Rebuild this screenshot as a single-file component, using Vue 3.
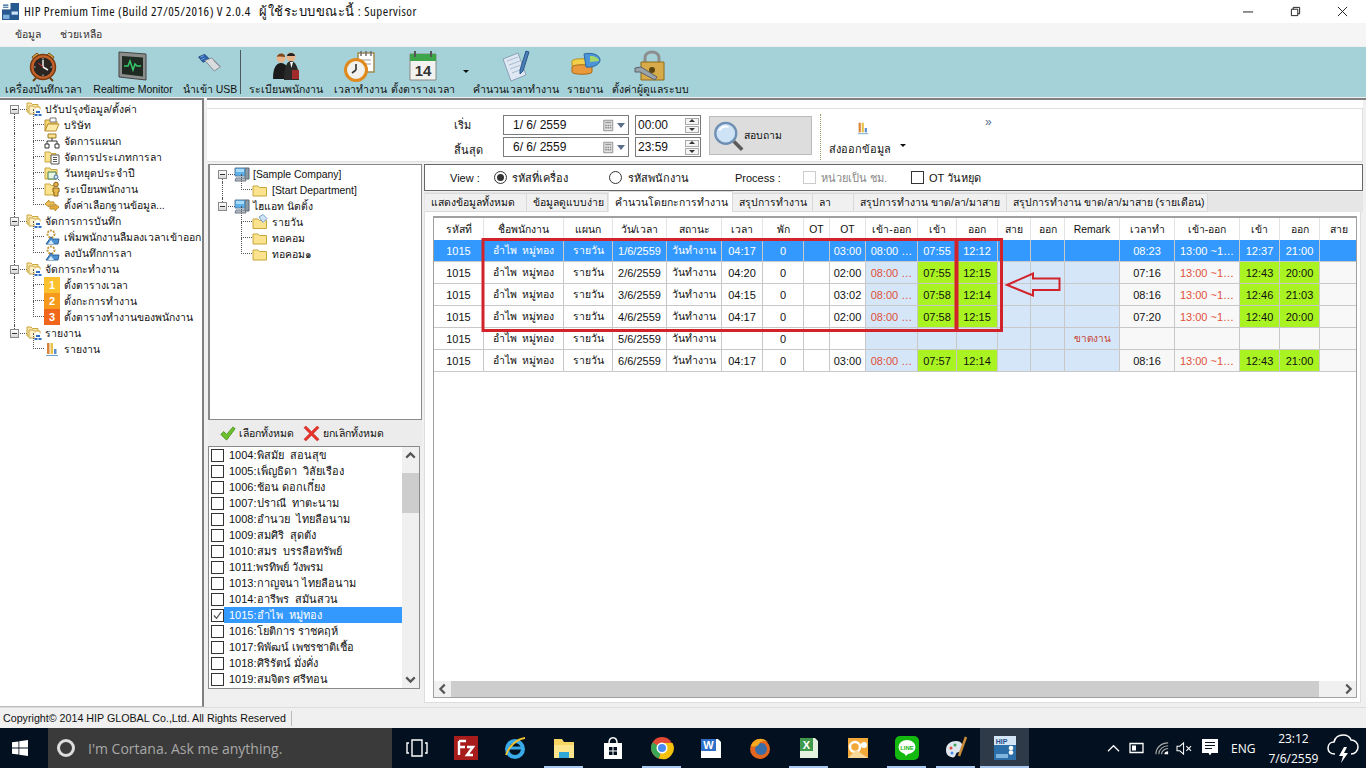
<template>
  <div class="app">
    <!-- shared icons -->
    <svg class="defs" aria-hidden="true">
      <symbol id="folder" viewBox="0 0 16 16"><path d="M1 4h5l1.500 1.500H14.500V14H1z" fill="#fbe28c" stroke="#c8a63e"/></symbol>
      <symbol id="folder-open" viewBox="0 0 16 16"><path d="M1 3h5l1.500 1.500H13V7H4l-3 7z" fill="#f6d774" stroke="#b98f2c"/><path d="M4 7h11l-3 7H1z" fill="#fdeaa6" stroke="#b98f2c"/><path d="M6 1h6v4H6z" fill="#fff" stroke="#777"/></symbol>
      <symbol id="folder-paper" viewBox="0 0 16 16"><path d="M1 5h5l1.500 1.500H14.500V14.500H1z" fill="#fbe28c" stroke="#c8a63e"/><path d="M7 3l4-2.500 4 4-4 4z" fill="#cfe3f7" stroke="#7aa1c9"/></symbol>
      <symbol id="group" viewBox="0 0 16 16"><path d="M1 2h4l1.500 1.500H12V11H1z" fill="#fbe7ae" stroke="#c8a63e"/><path d="M3 5h4l1.500 1H14V13H3z" fill="#fdf0c8" stroke="#c8a63e"/><path d="M9 9l3-2.500 3 2.500v6H9z" fill="#fff"/><path d="M10 10h4v2h-4zM8.500 13h3v2h-3zM12.500 13h3v2h-3z" fill="#2f6fc4"/></symbol>
      <symbol id="org" viewBox="0 0 16 16"><path d="M4 1h8v4H4z" fill="#fbe28c" stroke="#9a7d28"/><path d="M8 5v3M3 11V8h10v3" fill="none" stroke="#333"/><path d="M1 11h4v4H1zM11 11h4v4h-4z" fill="#fff" stroke="#333"/></symbol>
      <symbol id="folder-doc" viewBox="0 0 16 16"><path d="M1 3h5l1 1.500H12V13H1z" fill="#fbe28c" stroke="#c8a63e"/><path d="M7 6h8v9H7z" fill="#fff" stroke="#555"/><path d="M9 8.500h4M9 10.500h4M9 12.500h4" stroke="#555"/></symbol>
      <symbol id="folder-cal" viewBox="0 0 16 16"><path d="M1 3h5l1 1.500H13V14H1z" fill="#fbe28c" stroke="#c8a63e"/><path d="M4 7h8v7H4z" fill="#e9f6e6" stroke="#3f7f4a"/><circle cx="12" cy="12" r="2" fill="#cfe3f7" stroke="#4a74a8"/><path d="M13.500 13.500L15.500 15.500" stroke="#4a74a8"/></symbol>
      <symbol id="folder-man" viewBox="0 0 16 16"><path d="M1 3h5l1 1.500H10V14H1z" fill="#fbe28c" stroke="#c8a63e"/><circle cx="12" cy="3.500" r="2.300" fill="#e8b04a" stroke="#8a6416"/><path d="M9 7h6v4h-1v4h-4v-4H9z" fill="#e8b84a" stroke="#8a6416"/></symbol>
      <symbol id="swap" viewBox="0 0 16 16"><path d="M1 7l4-4v2h5v3H5v2z" fill="#f3c35a" stroke="#b98f2c"/><path d="M15 10l-4 4v-2H6V9h5V7z" fill="#e8a93a" stroke="#b98f2c"/></symbol>
      <symbol id="gear" viewBox="0 0 16 16"><circle cx="7" cy="5" r="3.500" fill="none" stroke="#c79a3d" stroke-width="2" stroke-dasharray="2 1"/><circle cx="7" cy="5" r="1.300" fill="#fff"/><path d="M2 15l5-7 1.500 2H15l-1 5z" fill="#4d92cf" stroke="#2f6199"/><path d="M4 15l3-4 3 4z" fill="#d8ecfb"/></symbol>
      <symbol id="bars" viewBox="0 0 16 16"><path d="M3 2h2.500v11H3z" fill="#d8843c"/><path d="M6.500 2H9v11H6.500z" fill="#e8c24a"/><path d="M10 8h2.500v5H10z" fill="#5b8fd0"/><path d="M2 14.500h12" stroke="#6aa0c9"/></symbol>
      <symbol id="computer" viewBox="0 0 16 16"><path d="M11 2h4v11h-4z" fill="#8d9aa8" stroke="#5b6773"/><path d="M1 2h10v8H1z" fill="#5cb1ee" stroke="#5b7f9e"/><path d="M2 3h8v3H2z" fill="#a6dcfa"/><path d="M2 12h9l1 3H1z" fill="#b3bcc6" stroke="#6f7a85"/></symbol>
      <symbol id="cal-drop" viewBox="0 0 16 16"><path d="M1 1h12v14H1z" fill="#e3e3e3" stroke="#777"/><path d="M3 3h8v2H3z" fill="#9a9a9a"/><path d="M3 7h2v2H3zM6 7h2v2H6zM9 7h2v2H9zM3 10h2v2H3zM6 10h2v2H6zM9 10h2v2H9z" fill="#8a8a8a"/></symbol>
    </svg>

    <header class="titlebar">
      <svg class="app-logo" viewBox="0 0 16 16"><path d="M0 0h16v16H0z" fill="#27588f"/><path d="M0 0h8v6H0z" fill="#fff"/><path d="M9 8h6v3H9z" fill="#cfe3f7"/><path d="M1 11h6v4H1z" fill="#7fb0de"/><path d="M1 2h5M1 4h5" stroke="#27588f"/></svg>
      <span class="title-text">HIP Premium Time (Build 27/05/2016) V 2.0.4 &nbsp;&nbsp;ผู้ใช้ระบบขณะนี้ : Supervisor</span>
      <div class="win-btns">
        <svg viewBox="0 0 12 12"><path d="M0 6.500h11" stroke="#111"/></svg>
        <svg viewBox="0 0 12 12"><path d="M1.500 3.500h7v7h-7zM3.500 3.500v-2h7v7h-2" fill="none" stroke="#111"/></svg>
        <svg viewBox="0 0 12 12"><path d="M1 1l10 10M11 1L1 11" stroke="#111"/></svg>
      </div>
    </header>

    <nav class="menubar">
      <span>ข้อมูล</span>
      <span>ช่วยเหลือ</span>
    </nav>

    <div class="toolbar">
      <template v-for="t in tools" :key="t.label">
        <div v-if="t.sep" class="tool-sep"></div>
        <div class="tool" :class="t.cls">
          <svg class="tool-icon" viewBox="0 0 32 32" v-html="t.svg"></svg>
          <span>{{ t.label }}</span>
        </div>
        <div v-if="t.caret" class="tool-caret"></div>
      </template>
    </div>

    <div class="main">
      <aside class="side">
        <div class="tree">
          <div v-for="(r, i) in sideTree" :key="i" class="node" :class="r.cls">
            <i v-if="r.pipe" class="pipe" :class="r.pipe"></i>
            <b v-if="r.root" class="box"></b>
            <span v-if="r.badge" class="badge" :class="'b' + r.badge">{{ r.badge }}</span>
            <svg v-else class="ic"><use :href="'#' + r.icon" /></svg>
            <span class="node-text">{{ r.text }}</span>
          </div>
        </div>
      </aside>

      <section class="right">
        <div class="strip"></div>
        <div class="filter">
          <div class="f-labels">
            <span>เริ่ม</span>
            <span>สิ้นสุด</span>
          </div>
          <div class="f-col">
            <div v-for="d in ['1/ 6/ 2559', '6/ 6/ 2559']" :key="d" class="date">
              <span>{{ d }}</span>
              <svg class="cal"><use href="#cal-drop" /></svg>
              <i class="mini-caret"></i>
            </div>
          </div>
          <div class="f-col f-times">
            <div v-for="v in ['00:00', '23:59']" :key="v" class="time">
              <span>{{ v }}</span>
              <div class="spin"><i class="up"></i><i class="down"></i></div>
            </div>
          </div>
          <button class="query">
            <svg viewBox="0 0 34 34"><circle cx="14" cy="14" r="11.500" fill="#cfe3f7" stroke="#6d8fb3" stroke-width="2.500"/><path d="M7 11c2-4 6-5 10-4" stroke="#fff" stroke-width="2" fill="none"/><path d="M23 23l9 9" stroke="#5b5b5b" stroke-width="4"/></svg>
            <span>สอบถาม</span>
          </button>
          <div class="dotted"></div>
          <div class="export">
            <svg class="ic-export"><use href="#bars" /></svg>
            <div class="export-row"><span>ส่งออกข้อมูล</span><i class="mini-caret dark"></i></div>
          </div>
          <span class="more">»</span>
        </div>

        <div class="lower">
          <div class="mid">
            <div class="mid-tree">
              <div class="tree tree-mid">
                <div v-for="(r, i) in midTree" :key="i" class="node" :class="r.cls">
                  <i v-if="r.pipe" class="pipe" :class="r.pipe"></i>
                  <b v-if="r.root" class="box"></b>
                  <svg class="ic"><use :href="'#' + r.icon" /></svg>
                  <span class="node-text">{{ r.text }}</span>
                </div>
              </div>
            </div>
            <div class="list-tools">
              <svg viewBox="0 0 18 18"><path d="M2 10l3-3 3 3 7-8 2 2-9 12z" fill="#6cc22c" stroke="#4a8f1c"/></svg>
              <span>เลือกทั้งหมด</span>
              <svg class="x" viewBox="0 0 18 18"><path d="M1 3l2-2 6 6 6-6 2 2-6 6 6 6-2 2-6-6-6 6-2-2 6-6z" fill="#e8342c" stroke="#b8221c" stroke-width=".5"/></svg>
              <span>ยกเลิกทั้งหมด</span>
            </div>
            <div class="list">
              <div class="list-rows">
                <div v-for="p in people" :key="p" class="person" :class="{ on: p.startsWith('1015') }">
                  <span class="check">
                    <svg v-if="p.startsWith('1015')" viewBox="0 0 12 12"><path d="M2 6l3 3 5-7" fill="none" stroke="#555" stroke-width="1.300"/></svg>
                  </span>
                  <span class="person-name">{{ p }}</span>
                </div>
              </div>
              <div class="vscroll">
                <svg viewBox="0 0 16 16"><path d="M4 10l4-4 4 4" fill="none" stroke="#555" stroke-width="2"/></svg>
                <div class="vtrack"><div class="vthumb"></div></div>
                <svg viewBox="0 0 16 16"><path d="M4 6l4 4 4-4" fill="none" stroke="#555" stroke-width="2"/></svg>
              </div>
            </div>
          </div>

          <div class="work">
            <div class="viewbar">
              <span>View :</span>
              <span class="radio on"></span>
              <span>รหัสที่เครื่อง</span>
              <span class="radio"></span>
              <span>รหัสพนักงาน</span>
              <span>Process :</span>
              <span class="check off"></span>
              <span class="muted">หน่วยเป็น ชม.</span>
              <span class="check"></span>
              <span>OT วันหยุด</span>
            </div>
            <div class="tabs">
              <span v-for="t in tabs" :key="t.label" class="tab" :class="{ active: t.active }" :style="{ width: t.w + 'px' }">{{ t.label }}</span>
            </div>
            <div class="tab-body">
              <div class="grid">
                <div class="grid-scroll">
                  <table>
                    <colgroup><col v-for="(w, i) in colWidths" :key="i" :style="{ width: w + 'px' }"></colgroup>
                    <thead>
                      <tr><th v-for="(h, i) in headers" :key="i">{{ h }}</th></tr>
                    </thead>
                    <tbody>
                      <tr v-for="(row, ri) in rows" :key="ri" :class="{ sel: ri === 0 }">
                        <td v-for="(c, ci) in row" :key="ci" :class="cellClass(c, ci)">{{ c }}</td>
                      </tr>
                    </tbody>
                  </table>
                </div>
                <div class="hscroll">
                  <div class="harrow"><svg viewBox="0 0 16 16"><path d="M10 3L5 8l5 5" fill="none" stroke="#555" stroke-width="2.500"/></svg></div>
                  <div class="hthumb"></div>
                  <div class="htrack"></div>
                  <div class="harrow"><svg viewBox="0 0 16 16"><path d="M6 3l5 5-5 5" fill="none" stroke="#555" stroke-width="2.500"/></svg></div>
                </div>
              </div>
            </div>
          </div>
        </div>
      </section>
    </div>

    <footer class="status">
      <span>Copyright© 2014 HIP GLOBAL Co.,Ltd. All Rights Reserved</span>
      <i></i>
    </footer>

    <div class="taskbar">
      <div class="start">
        <svg viewBox="0 0 16 16"><path d="M0 2.300l6.500-.9v6.200H0zM7.300 1.300L16 0v7.600H7.300zM0 8.400h6.500v6.200L0 13.700zM7.300 8.400H16V16l-8.700-1.300z" fill="#fff"/></svg>
      </div>
      <div class="cortana">
        <i></i>
        <span>I'm Cortana. Ask me anything.</span>
      </div>
      <div v-for="a in apps" :key="a.id" class="task" :class="{ open: a.open, hip: a.id === 'hip' }">
        <svg viewBox="0 0 24 24" v-html="a.svg"></svg>
      </div>
      <div class="tray">
        <svg class="t1" viewBox="0 0 14 14"><path d="M1 10l6-6 6 6" fill="none" stroke="#fff" stroke-width="1.300"/></svg>
        <svg class="t2" viewBox="0 0 16 14"><path d="M1 2.500h13v9H1z" fill="none" stroke="#fff" stroke-width="1.300"/><path d="M3 4.500h4v5H3z" fill="#fff"/></svg>
        <svg class="t3" viewBox="0 0 16 16"><path d="M1 14C1 7 7 2 14 2M4 14c0-5 5-9 10-9M7 14c0-3 3-6 7-6" fill="none" stroke="#aaa" stroke-width="1.200"/><path d="M10 14c0-2 2-3 4-3v3z" fill="#fff"/></svg>
        <svg class="t4" viewBox="0 0 18 16"><path d="M1 5.500h3L8 2v12L4 10.500H1z" fill="none" stroke="#fff" stroke-width="1.100"/><path d="M11 5.500l5 5M16 5.500l-5 5" stroke="#fff" stroke-width="1.100"/></svg>
        <svg class="t5" viewBox="0 0 16 18"><path d="M0 0h16v14H9.500L8 16.500 6.500 14H0z" fill="#fff"/><path d="M3 3.500h10M3 6.500h10M3 9.500h7" stroke="#03101f" stroke-width="1.200"/></svg>
        <span class="eng">ENG</span>
        <div class="clock"><span>23:12</span><span>7/6/2559</span></div>
        <svg class="t6" viewBox="0 0 32 32"><path d="M8 22c-5 0-7-3-7-6 0-4 3-6 6-6 1-4 4-7 9-7 4 0 7 2 8 5 4 0 7 3 7 7 0 4-3 7-7 7" fill="none" stroke="#fff" stroke-width="1.500"/><path d="M17 15l-5 9h4l-2 7 7-10h-4l3-6z" fill="#fff"/></svg>
      </div>
    </div>

    <!-- red marks drawn over the screenshot -->
    <svg class="marks" viewBox="0 0 1366 768">
      <path d="M483 239.500h473v91H483zM957 239.500h44.500v91H957z" fill="none" stroke="#d2232a" stroke-width="3"/>
      <path d="M1007 285l26-11.500v5h26.500v11.500H1033v5.500z" fill="none" stroke="#d2232a" stroke-width="2"/>
    </svg>
  </div>
</template>

<script setup>
const tools = [
  { label: 'เครื่องบันทึกเวลา', cls: 'w1', svg: '<path d="M5 7l5-4 2 2-5 5zM27 7l-5-4-2 2 5 5z" fill="#d8a24a" stroke="#7a5316"/><path d="M9 28l-3 3M23 28l3 3" stroke="#6b3d12" stroke-width="2"/><circle cx="16" cy="17" r="12.500" fill="#c4622a" stroke="#7a3a12" stroke-width="1.500"/><circle cx="16" cy="17" r="9.500" fill="#2b2622"/><path d="M16 17V10M16 17l5 3" stroke="#eee" stroke-width="1.500"/><path d="M16 17l-5-4" stroke="#d33" /><path d="M16 8v1.500M16 24.500V26M7 17h1.500M23.500 17H25" stroke="#ccc"/>' },
  { label: 'Realtime Monitor', cls: 'w2', svg: '<path d="M2 2l27 2v26L2 27z" fill="#8a8d8b" stroke="#444"/><path d="M5 6l21 1.500v19L5 24z" fill="#1f2a22"/><path d="M7 16h4l2-5 3 9 2-6 2 2h4" fill="none" stroke="#38c76a" stroke-width="1.500"/>' },
  { label: 'นำเข้า USB', cls: 'w3', svg: '<path d="M3 8l7-3 5 5-7 4z" fill="#2a62b0" stroke="#18406f"/><path d="M10 12l8-3 10 10-7 5z" fill="#d8dcdf" stroke="#7d8489"/><path d="M20 12l7 7" stroke="#8b9298"/><path d="M5 8l4-1.500M6 11l4-2" stroke="#7fb0e6"/>' },
  { label: 'ระเบียนพนักงาน', cls: 'w4', sep: true, svg: '<circle cx="11" cy="8" r="4.500" fill="#e8b48a"/><path d="M7 7c0-4 8-5 8 0-3 0-5-1-8 0z" fill="#7a4a1e"/><path d="M3 29c0-11 3-16 8-16s8 5 8 16z" fill="#1b1b1b"/><circle cx="21" cy="7" r="4.500" fill="#e8b48a"/><path d="M17 6c0-4 8-4 8 0z" fill="#222"/><path d="M14 30c0-13 3-19 7-19s8 6 8 19z" fill="#2a2a2a"/><path d="M20 12h3l-1.500 6z" fill="#fff"/><path d="M22 20h7v9h-7z" fill="#a12a2a"/>' },
  { label: 'เวลาทำงาน', cls: 'w5', svg: '<path d="M14 3h16v19H14z" fill="#fff" stroke="#a08a52" stroke-width="1.500"/><path d="M17 1v5M22 1v5M27 1v5" stroke="#6d6d6d" stroke-width="1.500"/><path d="M17 10h10M17 14h10" stroke="#999"/><circle cx="12" cy="20" r="10.500" fill="#f0f0ee" stroke="#e08a1e" stroke-width="3"/><path d="M12 20v-6M12 20l-4 3" stroke="#333" stroke-width="1.600"/>' },
  { label: 'ตั้งตารางเวลา', cls: 'w6', caret: true, svg: '<path d="M3 4h26v26H3z" fill="#f2f2f0" stroke="#888"/><path d="M3 4h26v7H3z" fill="#3ea64a"/><path d="M8 1v6M24 1v6" stroke="#555" stroke-width="2"/><text x="16" y="26" text-anchor="middle" font-family="Liberation Sans" font-weight="700" font-size="15" fill="#333">14</text>' },
  { label: 'คำนวนเวลาทำงาน', cls: 'w7', svg: '<path d="M3 9l15-6 8 22-15 6z" fill="#dfe8f2" stroke="#8ba0b8"/><path d="M7 11l11-4M9 15l11-4M10 19l11-4M12 23l10-4" stroke="#a9bbcf"/><path d="M26 1l3 1-6 19-3 3 0-4z" fill="#4a7fb8" stroke="#2b5689"/>' },
  { label: 'รายงาน', cls: 'w8', svg: '<path d="M3 11c0-3 20-3 20 0v5c0 3-20 3-20 0z" fill="#f4d04a" stroke="#b69320"/><path d="M3 17c0-3 20-3 20 0v5c0 3-20 3-20 0z" fill="#e89a3c" stroke="#a96a1c"/><path d="M15 4c8-2 16 1 16 6s-8 8-14 7z" fill="#4b95d8" stroke="#2b6aa6"/><path d="M21 6c5 0 9 2 9 5l-9 1z" fill="#a5d86a"/>' },
  { label: 'ตั้งค่าผู้ดูแลระบบ', cls: 'w9', svg: '<path d="M11 12V8c0-8 14-8 14 0v4" fill="none" stroke="#8d8d8d" stroke-width="3"/><path d="M7 12h23v18H7z" fill="#d8ab4a" stroke="#8c6a1e"/><circle cx="18" cy="20" r="3" fill="#5a4412"/><path d="M1 18l6-1 16 10-2 3-15-8-5 0z" fill="#9ba3ab" stroke="#5b6269"/>' }
]

const sideTree = [
  { root: true, icon: 'group', text: 'ปรับปรุงข้อมูล/ตั้งค่า', pipe: 'start' },
  { icon: 'folder-open', text: 'บริษัท', cls: 'child', pipe: 'full' },
  { icon: 'org', text: 'จัดการแผนก', cls: 'child', pipe: 'full' },
  { icon: 'folder-doc', text: 'จัดการประเภทการลา', cls: 'child', pipe: 'full' },
  { icon: 'folder-cal', text: 'วันหยุดประจำปี', cls: 'child', pipe: 'full' },
  { icon: 'folder-man', text: 'ระเบียนพนักงาน', cls: 'child', pipe: 'full' },
  { icon: 'swap', text: 'ตั้งค่าเลือกฐานข้อมูล...', cls: 'child', pipe: 'full' },
  { root: true, icon: 'group', text: 'จัดการการบันทึก', pipe: 'full' },
  { icon: 'gear', text: 'เพิ่มพนักงานลืมลงเวลาเข้าออก', cls: 'child', pipe: 'full' },
  { icon: 'gear', text: 'ลงบันทึกการลา', cls: 'child', pipe: 'full' },
  { root: true, icon: 'group', text: 'จัดการกะทำงาน', pipe: 'full' },
  { badge: 1, text: 'ตั้งตารางเวลา', cls: 'child', pipe: 'full' },
  { badge: 2, text: 'ตั้งกะการทำงาน', cls: 'child', pipe: 'full' },
  { badge: 3, text: 'ตั้งตารางทำงานของพนักงาน', cls: 'child', pipe: 'full' },
  { root: true, icon: 'group', text: 'รายงาน', pipe: 'end' },
  { icon: 'bars', text: 'รายงาน', cls: 'child' }
]

const midTree = [
  { root: true, icon: 'computer', text: '[Sample Company]', pipe: 'start' },
  { icon: 'folder', text: '[Start Department]', cls: 'child', pipe: 'full' },
  { root: true, icon: 'computer', text: 'ไฮแอท นิตติ้ง', pipe: 'end' },
  { icon: 'folder-paper', text: 'รายวัน', cls: 'child' },
  { icon: 'folder', text: 'ทอคอม', cls: 'child' },
  { icon: 'folder', text: 'ทอคอม๑', cls: 'child' }
]

const people = [
  '1004:พิสมัย  สอนสุข', '1005:เพ็ญธิดา  วิลัยเรือง', '1006:ช้อน ดอกเกี๋ยง', '1007:ปราณี  ทาตะนาม',
  '1008:อำนวย  ไทยลือนาม', '1009:สมศิริ  สุดตัง', '1010:สมร  บรรลือทรัพย์', '1011:พรทิพย์ วังพรม',
  '1013:กาญจนา ไทยลือนาม', '1014:อารีพร  สมันสวน', '1015:อำไพ  หมู่ทอง', '1016:โยติการ ราชคฤห์',
  '1017:พิพัฒน์ เพชรชาติเชื้อ', '1018:ศิริรัตน์ มั่งคั่ง', '1019:สมจิตร ศรีทอน'
]

const tabs = [
  { label: 'แสดงข้อมูลทั้งหมด', w: 102 },
  { label: 'ข้อมูลดูแบบง่าย', w: 81 },
  { label: 'คำนวนโดยกะการทำงาน', w: 124, active: true },
  { label: 'สรุปการทำงาน', w: 80 },
  { label: 'ลา', w: 41 },
  { label: 'สรุปการทำงาน ขาด/ลา/มาสาย', w: 153 },
  { label: 'สรุปการทำงาน ขาด/ลา/มาสาย (รายเดือน)', w: 201 }
]

const colWidths = [50, 80, 49, 54, 55, 41, 41, 26, 36, 52, 39, 41, 33, 34, 55, 55, 65, 40, 40, 38]
const headers = ['รหัสที่', 'ชื่อพนักงาน', 'แผนก', 'วัน/เวลา', 'สถานะ', 'เวลา', 'พัก', 'OT', 'OT', 'เข้า-ออก', 'เข้า', 'ออก', 'สาย', 'ออก', 'Remark', 'เวลาทำ', 'เข้า-ออก', 'เข้า', 'ออก', 'สาย']

const makeRow = (day, work, ot, inA, outA, total, inB, outB) => [
  '1015', 'อำไพ  หมู่ทอง', 'รายวัน', `${day}/6/2559`, 'วันทำงาน', work, '0', '', ot,
  '08:00 …', inA, outA, '', '', '', total, '13:00 ~1…', inB, outB, ''
]

const rows = [
  makeRow(1, '04:17', '03:00', '07:55', '12:12', '08:23', '12:37', '21:00'),
  makeRow(2, '04:20', '02:00', '07:55', '12:15', '07:16', '12:43', '20:00'),
  makeRow(3, '04:15', '03:02', '07:58', '12:14', '08:16', '12:46', '21:03'),
  makeRow(4, '04:17', '02:00', '07:58', '12:15', '07:20', '12:40', '20:00'),
  ['1015', 'อำไพ  หมู่ทอง', 'รายวัน', '5/6/2559', 'วันทำงาน', '', '0', '', '', '', '', '', '', '', 'ขาดงาน', '', '', '', '', ''],
  makeRow(6, '04:17', '03:00', '07:57', '12:14', '08:16', '12:43', '21:00')
]

function cellClass(value, col) {
  return {
    blue: col >= 9 && col <= 14,
    soft: col >= 15,
    green: value && [10, 11, 17, 18].includes(col),
    red: value && (col === 9 || col === 16),
    absent: col === 14 && value,
    thai: col === 1 || col === 2 || col === 4
  }
}

const apps = [
  { id: 'view', svg: '<path d="M7 4h10v16H7z" fill="none" stroke="#fff" stroke-width="1.400"/><path d="M4 7H2v10h2M20 7h2v10h-2" fill="none" stroke="#fff" stroke-width="1.400"/>' },
  { id: 'fz', svg: '<path d="M0 0h24v24H0z" fill="#a81c1c"/><path d="M5 5h7M5 5v14M5 11h6M13 11h6l-6 8h6" fill="none" stroke="#fff" stroke-width="2.400"/>' },
  { id: 'ie', svg: '<circle cx="12" cy="13" r="8" fill="none" stroke="#39a9e8" stroke-width="4"/><path d="M5 12h15" stroke="#39a9e8" stroke-width="3"/><path d="M3 19C6 10 14 3 22 2" fill="none" stroke="#f2c230" stroke-width="1.800"/>' },
  { id: 'files', open: true, svg: '<path d="M2 3h8l2 3h10v16H2z" fill="#f8d562"/><path d="M2 9h20v13H2z" fill="#fce58d"/><path d="M7 22v-6h10v6z" fill="#31a6d8"/>' },
  { id: 'store', svg: '<path d="M3 7h18v16H3z" fill="#fff"/><path d="M8 7c0-7 8-7 8 0" fill="none" stroke="#fff" stroke-width="1.500"/><path d="M8 11h3.500v3.500H8zM12.500 11H16v3.500h-3.500zM8 15.500h3.500V19H8zM12.500 15.500H16V19h-3.500z" fill="#03101f"/>' },
  { id: 'chrome', open: true, svg: '<circle cx="12" cy="12" r="11" fill="#e24a36"/><path d="M12 12L2.500 6.500A11 11 0 0 0 9 22.500z" fill="#3aa757"/><path d="M12 12l-3 10.500A11 11 0 0 0 22.500 7H12z" fill="#f4c20d"/><circle cx="12" cy="12" r="5.500" fill="#fff"/><circle cx="12" cy="12" r="4" fill="#4a8bf0"/>' },
  { id: 'word', svg: '<path d="M2 3h17l3 3v16H2z" fill="#fff"/><path d="M2 3h15v12H2z" fill="#2e6fc9"/><text x="9.500" y="13" text-anchor="middle" font-family="Liberation Sans" font-weight="700" font-size="11" fill="#fff">W</text>' },
  { id: 'firefox', svg: '<circle cx="12" cy="13" r="10" fill="#e5661e"/><circle cx="13" cy="13" r="6" fill="#3a6ea8"/><path d="M3 10C5 3 14 0 20 6c-4-2-8-1-9 2-2 3-5 3-8 2z" fill="#f6a81e"/>' },
  { id: 'excel', open: true, svg: '<path d="M3 2h15l3 3v17H3z" fill="#e6f2e0"/><path d="M3 2h13v13H3z" fill="#3f9a4e"/><text x="9.500" y="13" text-anchor="middle" font-family="Liberation Sans" font-weight="700" font-size="11" fill="#fff">X</text>' },
  { id: 'outlook', svg: '<path d="M2 2h20v20H2z" fill="#f2a93a"/><circle cx="9" cy="11" r="5" fill="none" stroke="#fff" stroke-width="2.500"/><circle cx="18" cy="9" r="3" fill="#fff"/><path d="M2 22l8-8 12 8z" fill="#f8d79a"/>' },
  { id: 'line', open: true, svg: '<path d="M0 5a5 5 0 0 1 5-5h14a5 5 0 0 1 5 5v14a5 5 0 0 1-5 5H5a5 5 0 0 1-5-5z" fill="#13b90f"/><ellipse cx="12" cy="11" rx="8.500" ry="7" fill="#fff"/><path d="M9 17l2 3 3-3z" fill="#fff"/><text x="12" y="13.500" text-anchor="middle" font-family="Liberation Sans" font-weight="700" font-size="6" fill="#13b90f">LINE</text>' },
  { id: 'paint', open: true, svg: '<path d="M2 14c0-6 5-9 10-9 6 0 8 5 6 9-1 3-5 1-6 4-1 3-2 4-5 3-3-1-5-3-5-7z" fill="#dfe6ee"/><circle cx="7" cy="12" r="1.500" fill="#e24a36"/><circle cx="11" cy="9" r="1.500" fill="#3aa757"/><circle cx="8" cy="17" r="1.500" fill="#4a8bf0"/><path d="M22 1l-7 19" stroke="#c98a3a" stroke-width="2.500"/>' },
  { id: 'hip', open: true, svg: '<path d="M1 0h22v24H1z" fill="#2b6ea8"/><path d="M1 0h22v9H1z" fill="#d3e5f4"/><text x="8.500" y="7.500" text-anchor="middle" font-family="Liberation Sans" font-weight="700" font-size="7" fill="#234e8a">HIP</text><circle cx="18" cy="12" r="2.300" fill="#fff"/><circle cx="18" cy="16.500" r="2.300" fill="#fff"/><path d="M3 18h12v4H3z" fill="#7fb6e0"/>' }
]
</script>

<style>
html, body { margin: 0; background: #f0f0f0; }
</style>

<style scoped>
.app {
  position: relative;
  width: 1366px;
  height: 768px;
  display: flex;
  flex-direction: column;
  overflow: hidden;
  font: 11px "Liberation Sans", "Noto Sans", "DejaVu Sans", sans-serif;
  color: #111;
  background: #f0f0f0;
}

.defs { position: absolute; width: 0; height: 0; }

.titlebar {
  height: 23px;
  flex: none;
  display: flex;
  align-items: center;
  background: #fff;
  padding-left: 2px;
}
.app-logo { width: 17px; height: 17px; margin-right: 5px; }
.title-text { font: 13px "Open Sans", "Noto Sans", sans-serif; font-stretch: 84%; letter-spacing: 0.5px; white-space: nowrap; }
.win-btns { margin-left: auto; display: flex; align-items: center; gap: 36px; padding-right: 18px; }
.win-btns svg { width: 11px; height: 11px; }

.menubar {
  height: 23px;
  flex: none;
  display: flex;
  align-items: center;
  gap: 19px;
  padding-left: 15px;
  background: #f5f5f5;
  color: #333;
  font-size: 10.400px;
}

.toolbar {
  height: 50px;
  margin-top: 1px;
  flex: none;
  display: flex;
  background: #a5d2d8;
}
.tool { display: flex; flex-direction: column; align-items: center; justify-content: space-between; padding: 3px 0 1px; box-sizing: border-box; white-space: nowrap; font-size: 10.500px; }
.tool span { line-height: 13px; height: 13px; }
.tool-icon { width: 32px; height: 32px; }
.w1 { width: 86px; }
.w2 { width: 94px; }
.w3 { width: 60px; }
.w4 { width: 90px; }
.w5 { width: 58px; }
.w6 { width: 68px; }
.w7 { width: 82px; }
.w8 { width: 56px; }
.w9 { width: 74px; }
.w3 .tool-icon { width: 28px; height: 28px; }
.tool-sep { width: 1px; margin: 3px 0; background: #4a5a5e; }
.tool-caret { width: 18px; display: flex; align-items: center; justify-content: center; }
.tool-caret::before { content: ""; border: 3px solid transparent; border-top: 3px solid #111; margin-top: 2px; }

.main { flex: 1; display: flex; padding-top: 1px; gap: 3px; min-height: 0; }

.side {
  width: 202px;
  flex: none;
  background: #fff;
  border-top: 2px solid #808080;
  border-right: 2px solid #808080;
  border-bottom: 1px solid #bbb;
  padding-top: 1px;
}

.tree { font-size: 10.400px; }
.node { position: relative; height: 16px; display: flex; align-items: center; padding-left: 26px; white-space: nowrap; }
.node.child { padding-left: 44px; }
.node.child::before {
  content: "";
  position: absolute;
  left: 33px;
  top: -8px;
  width: 11px;
  height: 16px;
  border-left: 1px dotted #555;
  border-bottom: 1px dotted #555;
  box-sizing: border-box;
}
.ic { width: 16px; height: 16px; flex: none; position: relative; }
.node-text { margin-left: 3px; }
.node.child .node-text { margin-left: 4px; }
.pipe { position: absolute; left: 14px; border-left: 1px dotted #555; top: 0; bottom: 0; }
.pipe.start { top: 8px; }
.pipe.end { bottom: 8px; }
.box {
  position: absolute;
  left: 10px;
  top: 4px;
  width: 9px;
  height: 9px;
  box-sizing: border-box;
  border: 1px solid #8a8a8a;
  background: linear-gradient(#fff, #d8d8d8);
}
.box::before { content: ""; position: absolute; left: 1px; right: 1px; top: 3px; height: 1px; background: #333; }
.box::after { content: ""; position: absolute; left: 9px; top: 3px; width: 7px; border-top: 1px dotted #555; }
.badge {
  width: 16px;
  height: 16px;
  flex: none;
  color: #fff;
  text-align: center;
  font-weight: 700;
  line-height: 16px;
  font-size: 11px;
  position: relative;
}
.b1 { background: #fbc02d; }
.b2 { background: #f59a1c; }
.b3 { background: #f0661a; }

.right { flex: 1; min-width: 0; display: flex; flex-direction: column; border-top: 2px solid #808080; }
.strip { height: 8px; background: #fff; flex: none; margin-right: 3px; }
.filter {
  height: 54px;
  flex: none;
  box-sizing: border-box;
  margin-right: 3px;
  display: flex;
  align-items: flex-start;
  padding: 6px 0 0 247px;
  background: #fff;
  border: 1px solid #e0e0e0;
  border-left: 0;
}
.f-labels { width: 49px; display: flex; flex-direction: column; gap: 11px; padding-top: 1px; }
.f-labels span { height: 14px; }
.f-col { display: flex; flex-direction: column; gap: 2px; }
.f-times { margin-left: 6px; }
.date {
  width: 126px;
  height: 20px;
  box-sizing: border-box;
  border: 1px solid #7a7a7a;
  display: flex;
  align-items: center;
  padding-left: 9px;
  font-size: 12px;
}
.cal { width: 12px; height: 13px; margin-left: auto; }
.mini-caret { border: 4px solid transparent; border-top: 5px solid #5a6f8a; margin: 5px 3px 0 2px; }
.mini-caret.dark { border-width: 3px; border-top: 3px solid #111; margin: 0 0 4px 9px; }
.time {
  width: 66px;
  height: 20px;
  box-sizing: border-box;
  border: 1px solid #7a7a7a;
  display: flex;
  align-items: center;
  padding-left: 2px;
  font-size: 12px;
}
.spin { margin-left: auto; display: flex; flex-direction: column; gap: 1px; padding-right: 1px; }
.spin i { width: 14px; height: 7px; border: 1px solid #aaa; background: #f4f4f4; box-sizing: border-box; position: relative; }
.spin i::before { content: ""; position: absolute; left: 3px; border: 3px solid transparent; }
.spin .up::before { border-bottom: 3px solid #333; top: -3px; }
.spin .down::before { border-top: 3px solid #333; top: 1px; }
.query {
  margin: 1px 0 0 8px;
  width: 103px;
  height: 39px;
  display: flex;
  align-items: center;
  padding: 0 0 0 3px;
  font: 10.400px "Liberation Sans", "Noto Sans", sans-serif;
  color: #111;
  background: #ddd;
  border: 1px solid #bbb;
}
.query svg { width: 31px; height: 34px; margin-right: 0; }
.dotted { height: 46px; margin: -1px 0 0 8px; border-left: 1px dotted #9a9a66; }
.export { display: flex; flex-direction: column; align-items: center; margin: 6px 0 0 8px; width: 80px; }
.ic-export { width: 14px; height: 14px; margin-left: -12px; }
.export-row { display: flex; align-items: center; margin-top: 5px; align-self: flex-start; }
.more { margin: 0 0 0 76px; color: #5a6f8a; font-size: 12px; }

.lower { flex: 1; min-height: 0; display: flex; margin-top: 2px; }
.mid { width: 214px; flex: none; margin-left: 1px; display: flex; flex-direction: column; }
.mid-tree {
  height: 256px;
  flex: none;
  box-sizing: border-box;
  background: #fff;
  border: 1px solid #8a8a8a;
  border-left-width: 2px;
  padding-top: 1px;
  overflow: hidden;
}
.tree-mid { margin-left: -2px; }
.list-tools { height: 26px; flex: none; display: flex; align-items: center; padding-left: 11px; background: #ececec; gap: 3px; font-size: 10.500px; }
.list-tools svg { width: 17px; height: 17px; }
.list-tools .x { margin-left: 6px; }
.list {
  width: 212px;
  height: 243px;
  flex: none;
  box-sizing: border-box;
  background: #fff;
  border: 1px solid #8a8a8a;
  display: flex;
}
.list-rows { flex: 1; min-width: 0; }
.person { height: 16px; display: flex; align-items: center; padding-left: 2px; }
.check {
  width: 13px;
  height: 13px;
  flex: none;
  box-sizing: border-box;
  border: 1px solid #333;
  background: #fff;
  display: block;
}
.check svg { display: block; width: 11px; height: 11px; }
.check.off { border-color: #ccc; }
.person-name { flex: 1; height: 16px; line-height: 16px; padding-left: 5px; white-space: pre; }
.person.on .person-name { background: #3399ff; color: #fff; }
.vscroll { width: 17px; flex: none; display: flex; flex-direction: column; background: #f0f0f0; }
.vscroll svg { width: 17px; height: 17px; flex: none; }
.vtrack { flex: 1; }
.vthumb { height: 40px; margin-top: 9px; background: #cdcdcd; }

.work { flex: 1; min-width: 0; display: flex; flex-direction: column; margin-left: 2px; margin-right: 3px; }
.viewbar {
  height: 27px;
  flex: none;
  box-sizing: border-box;
  display: grid;
  grid-template-columns: 44px 18px 97px 19px 107px 68px 18px 90px 18px auto;
  align-items: center;
  padding-left: 25px;
  background: #fff;
  border: 1px solid #666;
}
.radio { width: 13px; height: 13px; box-sizing: border-box; border: 1px solid #333; border-radius: 50%; background: #fff; position: relative; display: block; }
.radio.on::before { content: ""; position: absolute; inset: 2px; border-radius: 50%; background: #333; }
.muted { color: #888; }
.tabs { height: 20px; margin-top: 1px; flex: none; display: flex; align-items: flex-end; background: #e6e6e6; padding-left: 1px; }
.tab {
  height: 19px;
  box-sizing: border-box;
  display: flex;
  align-items: center;
  padding-left: 6px;
  white-space: nowrap;
  font-size: 10.400px;
  background: #f0f0f0;
  border: 1px solid #d9d9d9;
  border-left: 0;
}
.tab.active { height: 21px; background: #fff; margin-left: 1px; border-bottom: 0; }
.tab-body {
  flex: 1;
  min-height: 0;
  margin: 0 2px 4px 0;
  padding: 4px 3px 4px 8px;
  background: #fff;
  border: 1px solid #ddd;
  border-top: 0;
  display: flex;
  flex-direction: column;
}
.grid {
  flex: 1;
  min-height: 0;
  display: flex;
  flex-direction: column;
  border: 1px solid #a0a0a0;
  border-top-width: 2px;
}
.grid-scroll { flex: 1; min-height: 0; overflow: hidden; }
table { table-layout: fixed; width: 924px; border-collapse: separate; border-spacing: 0; }
th, td {
  height: 22px;
  box-sizing: border-box;
  padding: 0;
  text-align: center;
  white-space: pre;
  overflow: hidden;
  font-weight: 400;
  border-right: 1px solid #c8c8c8;
  border-bottom: 1px solid #c8c8c8;
}
th { background: #fff; font-size: 10.400px; border-right-color: #e4e4e4; border-bottom: 0; }
td.thai { font-size: 10.400px; }
td.blue { background: #d5e6f8; }
td.soft { background: #f8f8f8; }
td.green { background: #a9f322; }
td.red { color: #e0503a; }
td.absent { color: #c8402c; font-size: 10px; }
tr.sel td { background: #3399ff; color: #fff; }
.hscroll { height: 16px; flex: none; display: flex; background: #f0f0f0; }
.harrow { width: 17px; flex: none; display: flex; align-items: center; justify-content: center; }
.harrow svg { width: 14px; height: 14px; }
.hthumb { width: 868px; background: #cdcdcd; }
.htrack { flex: 1; }

.status {
  height: 21px;
  flex: none;
  display: flex;
  align-items: center;
  padding-left: 3px;
  background: #f0f0f0;
  border-top: 1px solid #ddd;
  box-sizing: border-box;
  font-size: 10.700px;
}
.status i { width: 1px; height: 15px; margin-left: 5px; background: #bbb; }

.taskbar {
  height: 40px;
  flex: none;
  display: flex;
  align-items: stretch;
  background: #03101f;
  color: #fff;
}
.start { width: 48px; display: flex; align-items: center; justify-content: center; flex: none; box-sizing: border-box; padding-right: 8px; }
.start svg { width: 16px; height: 16px; }
.cortana {
  width: 344px;
  flex: none;
  display: flex;
  align-items: center;
  gap: 13px;
  padding-left: 9px;
  box-sizing: border-box;
  background: #3a3a3a;
  color: #a8a8a8;
  font: 14px "Open Sans", "Noto Sans", sans-serif;
}
.cortana i { width: 18px; height: 18px; box-sizing: border-box; border: 3px solid #ddd; border-radius: 50%; }
.task { width: 49px; flex: none; display: flex; align-items: center; justify-content: center; position: relative; }
.task svg { width: 24px; height: 24px; }
.task.open::after { content: ""; position: absolute; left: 5px; right: 5px; bottom: 0; height: 2px; background: #a9c8f0; }
.task.hip { background: #2e3a48; }
.task.hip::after { left: 0; right: 0; }
.tray { flex: 1; display: flex; align-items: center; position: relative; padding-left: 78px; }
.t1 { width: 13px; height: 13px; }
.t2 { width: 16px; height: 14px; margin-left: 9px; }
.t3 { width: 15px; height: 15px; margin-left: 10px; }
.t4 { width: 17px; height: 15px; margin-left: 6px; }
.t5 { width: 16px; height: 18px; margin-left: 9px; }
.eng { margin-left: 13px; font: 12px "Open Sans", "Noto Sans", sans-serif; }
.clock { margin-left: 13px; width: 50px; display: flex; flex-direction: column; align-items: center; gap: 3px; font: 12px "Open Sans", "Noto Sans", sans-serif; }
.t6 { width: 32px; height: 32px; margin-left: 9px; }

.marks { position: absolute; left: 0; top: 0; width: 1366px; height: 768px; pointer-events: none; }
</style>
